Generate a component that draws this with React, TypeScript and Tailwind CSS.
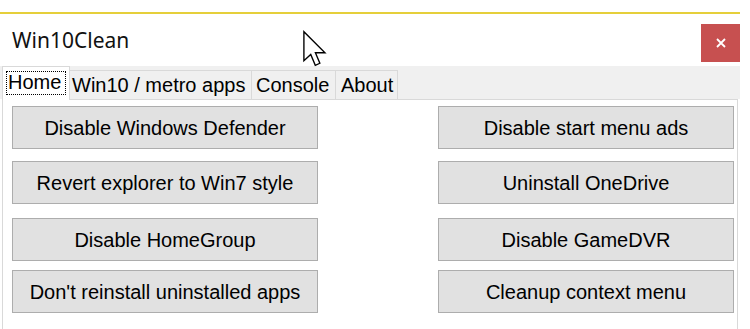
import React from "react";

const leftButtons = [
  { label: "Disable Windows Defender", mt: "mt-[6px]" },
  { label: "Revert explorer to Win7 style", mt: "mt-[12px]" },
  { label: "Disable HomeGroup", mt: "mt-[14px]" },
  { label: "Don't reinstall uninstalled apps", mt: "mt-[9px]" },
];

const rightButtons = [
  { label: "Disable start menu ads", mt: "mt-[6px]" },
  { label: "Uninstall OneDrive", mt: "mt-[12px]" },
  { label: "Disable GameDVR", mt: "mt-[14px]" },
  { label: "Cleanup context menu", mt: "mt-[9px]" },
];

function WinButton({ label, className }: { label: string; className: string }) {
  return (
    <button
      className={`h-[43px] bg-[#e1e1e1] border border-[#adadad] text-[20px] text-black font-['Liberation_Sans',Arial,sans-serif] ${className}`}
    >
      {label}
    </button>
  );
}

export default function App() {
  return (
    <div className="relative w-[750px] h-[329px] bg-white overflow-hidden font-['Liberation_Sans',Arial,sans-serif]">
      {/* accent border */}
      <div className="h-[12px]" />
      <div className="w-[740px] h-[2px] bg-[#e5cf3a]" />

      {/* title bar */}
      <div className="w-[740px] h-[52px] flex items-start justify-between">
        <div className="pl-[12px] pt-[12px] text-[21px] leading-[28px] text-[#111] font-['Noto_Sans','Open_Sans',sans-serif]">
          Win10Clean
        </div>
        <button className="mt-[10px] w-[39px] h-[38px] bg-[#c75050] flex items-center justify-center">
          <svg width="10" height="10" viewBox="0 0 10 10">
            <path d="M1 1L9 9M9 1L1 9" stroke="white" strokeWidth="1.8" />
          </svg>
        </button>
      </div>

      {/* tab strip */}
      <div className="w-[740px] h-[33px] bg-[#f0f0f0] flex items-end text-[20px] leading-[22px] text-black">
        <div className="ml-[2px] w-[68px] h-[34px] -mb-[1px] bg-white border border-b-0 border-[#d9d9d9] px-[3px] pt-[5px] relative z-10">
          <div className="border border-dotted border-black px-[1px] h-[24px] leading-[20px] -mt-[1px]">Home</div>
        </div>
        <div className="h-[29px] px-[2px] border border-l-0 border-b-0 border-[#d9d9d9] flex items-center w-[182px]">
          Win10 / metro apps
        </div>
        <div className="h-[29px] px-[4px] border border-l-0 border-b-0 border-[#d9d9d9] flex items-center w-[84px]">
          Console
        </div>
        <div className="h-[29px] px-[5px] border border-l-0 border-b-0 border-[#d9d9d9] flex items-center w-[62px]">
          About
        </div>
      </div>

      {/* tab panel */}
      <div className="ml-[2px] w-[736px] h-[240px] bg-white border border-b-0 border-[#d9d9d9] flex justify-between pl-[9px] pr-[3px]">
        <div className="flex flex-col w-[306px]">
          {leftButtons.map((b) => (
            <WinButton key={b.label} label={b.label} className={b.mt} />
          ))}
        </div>
        <div className="flex flex-col w-[296px]">
          {rightButtons.map((b) => (
            <WinButton key={b.label} label={b.label} className={b.mt} />
          ))}
        </div>
      </div>

      {/* mouse pointer */}
      <svg className="absolute left-[302px] top-[30px]" width="30" height="41" viewBox="0 0 26 36">
        <path
          d="M1.5 1.5 L1.5 27 L7.5 21.5 L11.5 31 L15.5 29.2 L11.6 20 L20 20 Z"
          fill="white"
          stroke="black"
          strokeWidth="1.2"
          strokeLinejoin="miter"
        />
      </svg>
    </div>
  );
}
